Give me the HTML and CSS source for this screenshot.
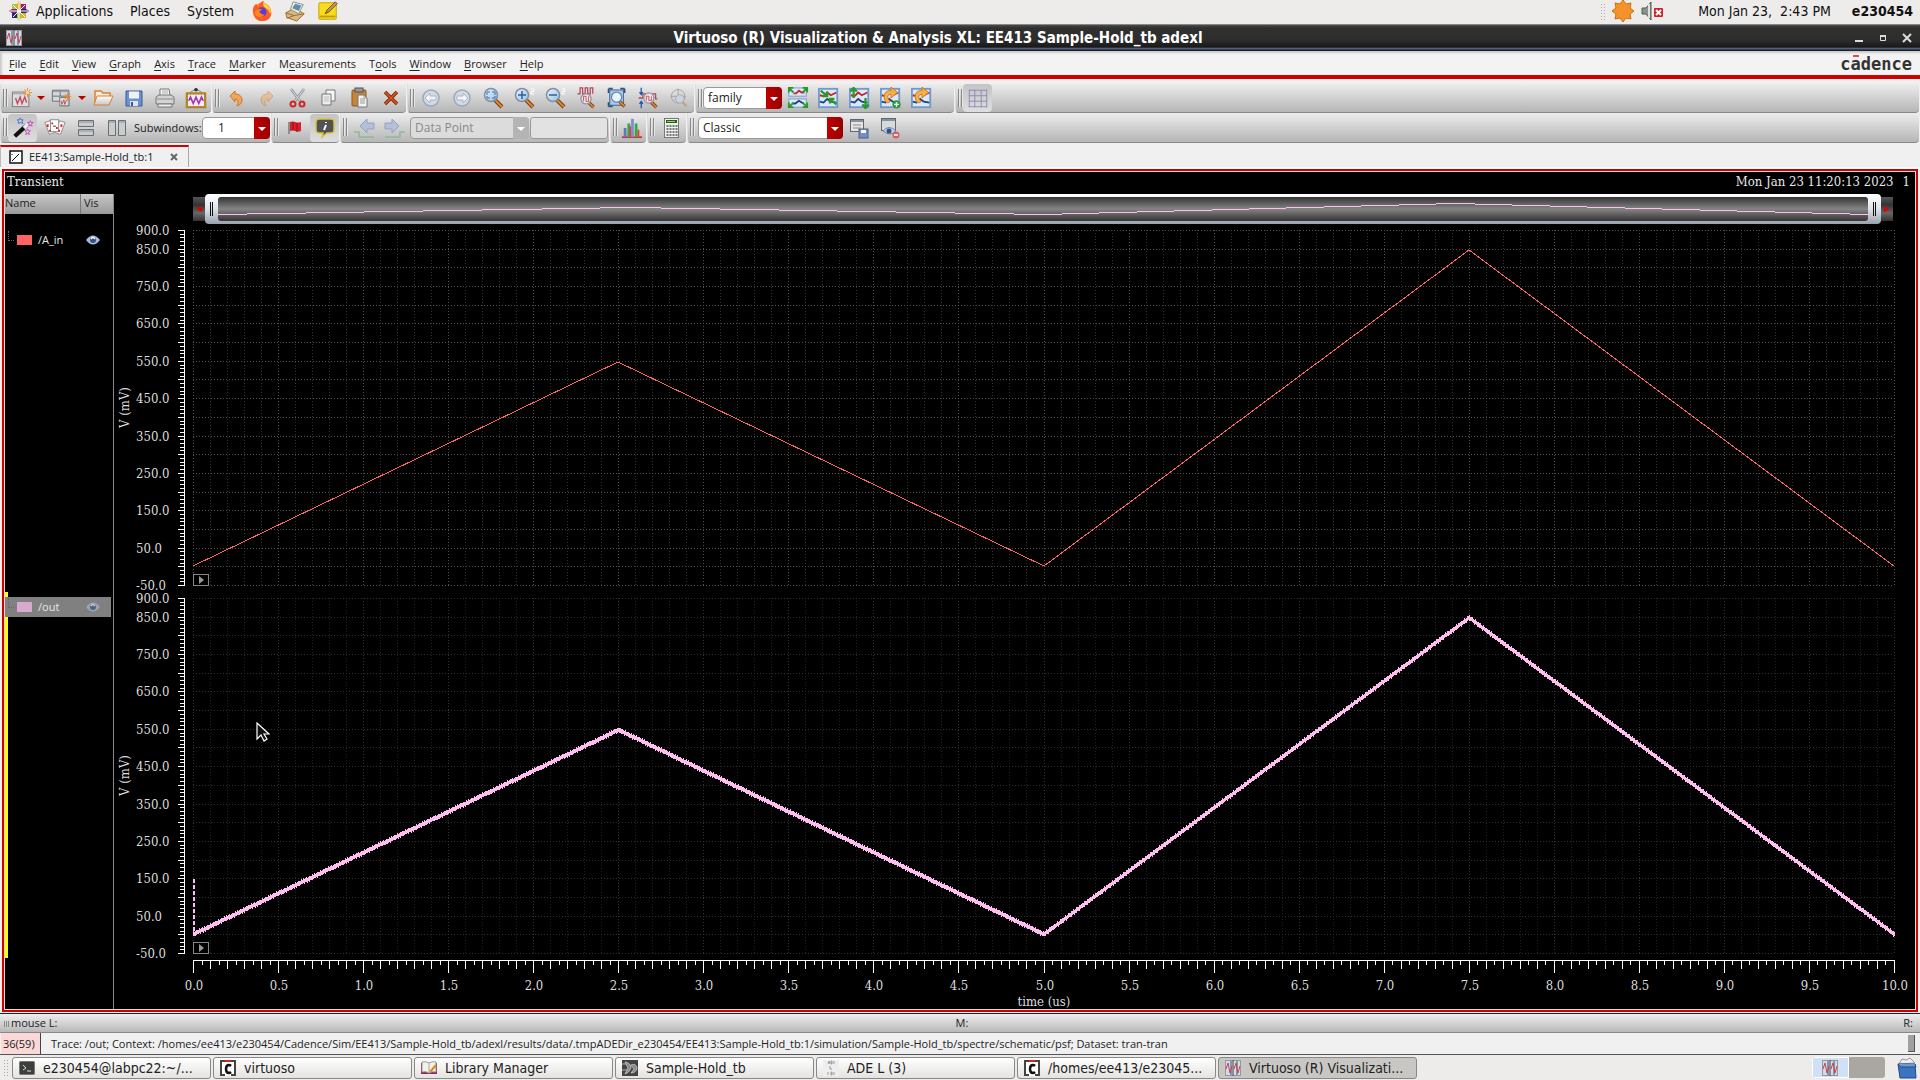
FILE: index.html
```html
<!DOCTYPE html>
<html lang="en">
<head>
<meta charset="utf-8">
<title>Virtuoso (R) Visualization &amp; Analysis XL: EE413 Sample-Hold_tb adexl</title>
<link rel="stylesheet" href="styles.css">
</head>
<body>
<svg class="sprite" aria-hidden="true">
  <linearGradient id="g-sheet" x1="0" y1="0" x2="0" y2="1"><stop offset="0" stop-color="#fff"/><stop offset="1" stop-color="#c8c8c8"/></linearGradient>
  <linearGradient id="g-lens" x1="0" y1="0" x2="1" y2="1"><stop offset="0" stop-color="#e8f2fc"/><stop offset="1" stop-color="#9dbfe2"/></linearGradient>
  <symbol id="i-wave" viewBox="0 0 16 16"><rect x="0.5" y="0.5" width="15" height="15" fill="#d4dae2" stroke="#999"/><rect x="5" y="1" width="2" height="14" fill="#7f97bf"/><rect x="11" y="1" width="2" height="14" fill="#7f97bf"/><path d="M8 0v16" stroke="#444"/><path d="M1 9 3 3 5 13 7 6M9 9 11 3 13 13 15 6" fill="none" stroke="#c8434b"/></symbol>
  <symbol id="i-new" viewBox="0 0 24 22"><rect x="1.500" y="4.500" width="18" height="16" fill="#ddd" stroke="#777"/><path d="M2 6h17" stroke="#aaa" stroke-width="2"/><path d="M5 11l2 6 3-7 2 7 3-7 2 6" fill="none" stroke="#c04858" stroke-width="1.500"/><path d="M18 0v10M13 5h10M14.500 1.500l7 7M21.500 1.500l-7 7" stroke="#e88a2a"/><circle cx="18" cy="5" r="2" fill="#ffd27a"/></symbol>
  <symbol id="i-newsub" viewBox="0 0 24 22"><path d="M1.500 2.500h18v17h-9v-5h-9z" fill="#d4d8d8" stroke="#667"/><path d="M2 9h17M10 3v6" stroke="#667"/><path d="M2 4h17" stroke="#8a98a8"/><rect x="9.500" y="10.500" width="10" height="9" fill="#ddd" stroke="#777"/><path d="M11 14l1 4 2-5 1 5 2-5" fill="none" stroke="#c04858"/><path d="M18 5v9M14 9.500h8M15 6.500l6 6M21 6.500l-6 6" stroke="#e8862a"/></symbol>
  <symbol id="i-open" viewBox="0 0 22 22"><path d="M3 18V4h6l2 2h7v4" fill="#f7ead8" stroke="#d98230" stroke-width="1.500"/><path d="M2 18L5 9h16l-4 9z" fill="url(#g-sheet)" stroke="#d98230"/></symbol>
  <symbol id="i-save" viewBox="0 0 22 22"><path d="M3 4h16v15H3z" fill="#6a93cd" stroke="#39598f"/><rect x="6" y="4.500" width="10" height="7" fill="#eef2f8"/><rect x="7" y="14" width="8" height="5" fill="#dfe4ec"/><rect x="8" y="15" width="2" height="4" fill="#39598f"/></symbol>
  <symbol id="i-print" viewBox="0 0 22 22"><path d="M6 9V2h9l1 7" fill="#fafafa" stroke="#777"/><path d="M8 4h6M8 6h6" stroke="#aaa"/><path d="M2 10l3-2h12l3 2v7H2z" fill="#d4d4d4" stroke="#777"/><path d="M4 17h14v3H4z" fill="#eee" stroke="#777"/><path d="M3 12h16" stroke="#888"/></symbol>
  <symbol id="i-snap" viewBox="0 0 24 24"><path d="M4 7l8-5 8 5" fill="none" stroke="#777"/><circle cx="12" cy="3" r="2" fill="#333"/><rect x="2" y="7" width="20" height="15" fill="#f4ecf4" stroke="#b48522" stroke-width="2.500"/><path d="M4 15l2-4 3 7 3-7 3 7 3-7 2 4" fill="none" stroke="#a83ab0" stroke-width="1.800"/></symbol>
  <symbol id="i-undo" viewBox="0 0 22 22"><path d="M5 9l5-5v3c5 0 7 3 7 6s-2 5-5 6c2-4 1-7-2-7v3z" fill="#f3a65a" stroke="#c97430"/></symbol>
  <symbol id="i-cut" viewBox="0 0 22 22"><path d="M4 2l9 12M17 2L8 14" stroke="#8a9096" stroke-width="2.500"/><path d="M4 2l9 12M17 2L8 14" stroke="#dfe3e8"/><circle cx="6" cy="17" r="2.500" fill="none" stroke="#d0262a" stroke-width="2"/><circle cx="15" cy="17" r="2.500" fill="none" stroke="#d0262a" stroke-width="2"/></symbol>
  <symbol id="i-copy" viewBox="0 0 22 22"><path d="M8 3h9v11H8z" fill="#f6f6f6" stroke="#777"/><path d="M4 7h9v11H4z" fill="#eee" stroke="#777"/><path d="M6 10h5M6 12h5M6 14h5" stroke="#bbb"/></symbol>
  <symbol id="i-paste" viewBox="0 0 22 22"><rect x="3" y="3" width="14" height="16" rx="1" fill="#c5853c" stroke="#895a20"/><rect x="6" y="1" width="8" height="4" fill="#999" stroke="#555"/><path d="M9 8h6l3 3v9H9z" fill="#f5f5f5" stroke="#777"/><path d="M15 8v3h3M11 12h5M11 14h5M11 16h5" fill="none" stroke="#999"/></symbol>
  <symbol id="i-x" viewBox="0 0 22 22"><path d="M5 5l12 12M17 5L5 17" stroke="#7c2a08" stroke-width="3.500"/><path d="M5 5l12 12M17 5L5 17" stroke="#e2581c" stroke-width="1.500"/></symbol>
  <symbol id="i-back" viewBox="0 0 22 22"><circle cx="11" cy="11" r="8" fill="#d2dae4" stroke="#9aa8bc" stroke-width="1.500"/><path d="M5 11l5-5v3h6v4h-6v3z" fill="#f2f4f8" stroke="#a9b5c6"/></symbol>
  <symbol id="i-lens" viewBox="0 0 22 22"><path d="M13 13l7 7" stroke="#7a3d0c" stroke-width="4"/><path d="M13 13l7 7" stroke="#e08a33" stroke-width="2"/><circle cx="9" cy="8" r="6.500" fill="url(#g-lens)" stroke="#7f8fa3" stroke-width="1.500"/></symbol>
  <symbol id="i-zfit" viewBox="0 0 22 22"><use href="#i-lens"/><path d="M5 5h3M5 5v3M13 5h-3M13 5v3M5 11h3M5 11V9M13 11h-3M13 11V9" stroke="#3d6fae"/></symbol>
  <symbol id="i-zin" viewBox="0 0 22 22"><use href="#i-lens"/><path d="M5 8h8M9 4v8" stroke="#2d5f9f" stroke-width="1.500"/><path d="M18 2h3v2.500h-3V7h3" fill="none" stroke="#fff"/></symbol>
  <symbol id="i-zout" viewBox="0 0 22 22"><use href="#i-lens"/><path d="M5 8h8" stroke="#2d5f9f" stroke-width="1.500"/><path d="M18 2h3v2.500h-3V7h3" fill="none" stroke="#fff"/></symbol>
  <symbol id="i-zx" viewBox="0 0 22 26"><path d="M1 8h3V1h3v7h3V1h3v7h3V1h3v7" fill="none" stroke="#b5475a" stroke-width="1.500"/><path d="M14 18l6 6" stroke="#7a3d0c" stroke-width="4"/><path d="M14 18l6 6" stroke="#e08a33" stroke-width="2"/><circle cx="11" cy="14" r="6" fill="#f3dfe6" stroke="#8c96a4" stroke-width="1.500"/><path d="M8 17v-6h3v6h3v-6" fill="none" stroke="#b5475a"/></symbol>
  <symbol id="i-zbox" viewBox="0 0 22 26"><rect x="2.500" y="3.500" width="16" height="18" fill="#a8cdee" stroke="#30527d"/><path d="M1 2h5M1 2v5M20 2h-5M20 2v5M1 23h5M1 23v-5" stroke="#30527d" stroke-width="2"/><path d="M14 17l6 6" stroke="#7a3d0c" stroke-width="4"/><path d="M14 17l6 6" stroke="#e08a33" stroke-width="2"/><circle cx="10.500" cy="12" r="6" fill="#eaf4fd" stroke="#6a87a8" stroke-width="1.500"/></symbol>
  <symbol id="i-zy" viewBox="0 0 22 26"><path d="M3 1v7M1 6l2 3 2-3M3 25v-7M1 20l2-3 2 3" fill="none" stroke="#1e5aa8" stroke-width="1.500"/><path d="M0 13h5V8h4M16 8h4v6h2" fill="none" stroke="#b5475a" stroke-width="1.500"/><path d="M15 18l6 6" stroke="#7a3d0c" stroke-width="4"/><path d="M15 18l6 6" stroke="#e08a33" stroke-width="2"/><circle cx="12" cy="13" r="6" fill="#f3dfe6" stroke="#8c96a4" stroke-width="1.500"/><path d="M9 16v-5h3v5h3v-5" fill="none" stroke="#b5475a"/></symbol>
  <symbol id="i-zpan" viewBox="0 0 22 26"><circle cx="10" cy="11" r="8" fill="none" stroke="#9b9b9b"/><path d="M10 2v16M1 11h18" stroke="#9b9b9b"/><path d="M14 17l6 6" stroke="#c9a27e" stroke-width="3"/><circle cx="12" cy="14" r="5" fill="#cbd4dc" stroke="#9aa8b6"/></symbol>
  <symbol id="i-curves" viewBox="0 0 24 24"><rect x="1" y="2" width="20" height="20" fill="#dbe8f7" stroke="#6f9ad0" stroke-width="2"/><path d="M2 9l4 1 4-4 4 3 6-3" fill="none" stroke="#c3262d" stroke-width="2"/><path d="M2 16l4 1 4-4 4 3 6 1" fill="none" stroke="#1f3f7f" stroke-width="2"/></symbol>
  <symbol id="i-expand" viewBox="0 0 24 24"><rect x="2" y="1" width="19" height="9" fill="#dbe8f7" stroke="#6f9ad0"/><rect x="2" y="13" width="19" height="9" fill="#dbe8f7" stroke="#6f9ad0"/><path d="M7 7h3l3-3 3 2h3" fill="none" stroke="#c3262d" stroke-width="2"/><path d="M6 18l3 0 4-3 5 3" fill="none" stroke="#1f3f7f" stroke-width="2"/><path d="M7 6L2 1m0 5V1h5M17 6l5-5m-5 0h5v5M7 17l-5 5m0-5v5h5M17 17l5 5m-5 0h5v-5" fill="none" stroke="#289a28" stroke-width="2"/></symbol>
  <symbol id="i-shrink" viewBox="0 0 24 24"><use href="#i-curves"/><path d="M3 4l7 6m0-5v5H5M20 19l-7-6m0 5v-5h5" fill="none" stroke="#289a28" stroke-width="2.500"/></symbol>
  <symbol id="i-updown" viewBox="0 0 24 24"><use href="#i-curves"/><path d="M5 12V2M1.500 5L5 1l3.500 4M18 12v10M14.500 19l3.500 4 3.500-4" fill="none" stroke="#289a28" stroke-width="2.500"/></symbol>
  <symbol id="i-reload" viewBox="0 0 24 24"><use href="#i-curves"/><path d="M6 16C2 8 7 3 12 4V0l7 6-7 6V8c-4 0-5 3-1 8-2 2-4 1-5 0z" fill="#f8b04a" stroke="#c87816"/></symbol>
  <symbol id="i-reloadplus" viewBox="0 0 24 24"><use href="#i-reload"/><circle cx="18" cy="19" r="4.500" fill="#2f9a3c"/><path d="M15.500 19h5M18 16.500v5" stroke="#fff" stroke-width="1.500"/></symbol>
  <symbol id="i-grid" viewBox="0 0 24 24"><path d="M2 3.500h20M2 9.500h20M2 15.500h20M2 21.500h20M2.500 3v19M8.500 3v19M15.500 3v19M21.500 3v19" stroke="#8a8ab8"/></symbol>
  <symbol id="i-wand" viewBox="0 0 24 24"><path d="M3 21L16 9" stroke="#111" stroke-width="4.500"/><path d="M13 12l4-4" stroke="#eee" stroke-width="4"/><path d="M9 1l1 2h2l-1 2 1 2-3-1-2 1 0-2-1-2h2z" fill="none" stroke="#3c6ad4"/><path d="M20 4l1 2h2l-2 2 1 2-2-1-2 1 1-2-2-2h2zM17 13l1 2h2l-2 2 1 2-2-1-2 1 1-2-2-2h2z" fill="none" stroke="#cf3bc0"/></symbol>
  <symbol id="i-cards" viewBox="0 0 24 22"><path d="M1 5l6-2 4 13-5 2zM23 5l-6-2-5 13 6 2z" fill="#fafafa" stroke="#888"/><rect x="7" y="2" width="9" height="13" fill="#fff" stroke="#888"/><path d="M4 7v3M9 5v2M14 10v2M19 7v3M17 13l-1 2M6 13l1 2" stroke="#d22" stroke-width="2"/><path d="M10 9h3" stroke="#222"/></symbol>
  <symbol id="i-rows" viewBox="0 0 22 22"><path d="M3.500 3.500h15v6h-15zM3.500 12.500h15v6h-15z" fill="#c9cdcd" stroke="#6a7070"/><path d="M4 5h14M4 14h14" stroke="#8094a8"/></symbol>
  <symbol id="i-cols" viewBox="0 0 22 22"><path d="M2.500 3.500h7v15h-7zM12.500 3.500h7v15h-7z" fill="#c9cdcd" stroke="#6a7070"/><path d="M3 5h6M13 5h6" stroke="#8094a8"/></symbol>
  <symbol id="i-flag" viewBox="0 0 22 22"><path d="M5 5v12" stroke="#777" stroke-width="1.500"/><path d="M6 5c4-2 6 2 11 0v9c-5 2-7-2-11 0z" fill="#d4202a"/><path d="M9 5v8M13 6v9" stroke="#8e1018"/></symbol>
  <symbol id="i-info" viewBox="0 0 22 22"><path d="M5 2h12q3 0 3 3v8q0 3-3 3h-4l-5 4 1-4H5q-3 0-3-3V5q0-3 3-3z" fill="#505256" stroke="#d9c43a" stroke-width="1.500"/><path d="M12 5v1M12 8l-2 5" stroke="#fff" stroke-width="2"/></symbol>
  <symbol id="i-prev" viewBox="0 0 22 22"><path d="M1 15h5v5h15" fill="none" stroke="#8dba9a" stroke-width="1.500"/><path d="M7 9l7-7v4h7v6h-7v4z" fill="#b3c0d8" stroke="#94a3c0"/></symbol>
  <symbol id="i-hist" viewBox="0 0 24 24"><path d="M1 22h22" stroke="#d33" stroke-width="2"/><path d="M3 22V12h3v10z" fill="#5b78c0"/><path d="M7 22V7h3v15zM15 22V7h3v15z" fill="#2fae3e"/><path d="M11 22V2h3v20z" fill="#7d8cd8"/><path d="M9 22V10h2v12zM18 22v-8h2v8z" fill="#dd4040"/></symbol>
  <symbol id="i-calc" viewBox="0 0 22 22"><rect x="4.500" y="1.500" width="14" height="19" fill="#efefef" stroke="#777"/><rect x="6" y="3" width="11" height="3" fill="#2a5a20"/><path d="M7 4.500h8" stroke="#7de840"/><path d="M6.500 9h11M6.500 12h11M6.500 15h11M6.500 18h11" stroke="#777" stroke-width="2" stroke-dasharray="2 1"/></symbol>
  <symbol id="i-panelsave" viewBox="0 0 22 22"><rect x="2.500" y="2.500" width="13" height="12" fill="#e4e6e4" stroke="#666"/><path d="M3 4h12" stroke="#8094a8" stroke-width="2"/><path d="M5 8h8M5 11h8" stroke="#888"/><rect x="11" y="12" width="9" height="9" fill="#7590c8" stroke="#4a5f90"/><path d="M13 13h5v3h-5z" fill="#fff"/></symbol>
  <symbol id="i-paneldel" viewBox="0 0 22 22"><rect x="2.500" y="1.500" width="14" height="12" fill="#d8dada" stroke="#666"/><path d="M3 3h13" stroke="#8094a8" stroke-width="2"/><path d="M4 14q6-7 13 0-6 6-13 0z" fill="#c4d4ee" stroke="#6680aa"/><circle cx="10" cy="14" r="2.500" fill="#34507c"/><circle cx="17" cy="18" r="3.500" fill="#d86060"/><path d="M15 18h4" stroke="#fff" stroke-width="1.500"/></symbol>
  <symbol id="i-eye" viewBox="0 0 14 10"><path d="M0 5q7-9 14 0-7 9-14 0z" fill="#a9bcdd"/><circle cx="7" cy="5" r="3" fill="#34507c"/><path d="M5 4q2-3 4 0" fill="none" stroke="#fff" stroke-width="1.500"/></symbol>
  <symbol id="i-cds" viewBox="0 0 16 16"><rect width="16" height="16" fill="#fff"/><path d="M5 1H1v14h4M11 1h4v14h-4" fill="none" stroke="#444" stroke-width="2"/><path d="M11 6q-1-1-2-1-3 0-3 4t3 4q1 0 2-1" fill="none" stroke="#111" stroke-width="2.500"/><path d="M5 1h6" stroke="#d22" stroke-width="2"/></symbol>
</svg>

<header class="panel">
  <nav class="panel-menu">
    <svg class="ic22" viewBox="0 0 22 22"><path d="M11 1l3 4h4v4l3 2-3 3v4h-4l-3 3-3-3H4v-4l-3-3 3-2V5h4z" fill="#e8d8e8"/><path d="M4 4h6v6H4z" fill="#9fcc3a"/><path d="M12 4h6v6h-6z" fill="#932279"/><path d="M4 12h6v6H4z" fill="#262577"/><path d="M12 12h6v6h-6z" fill="#efa724"/><path d="M11 1l2 3v6h-4V4z" fill="#efa724"/><path d="M21 11l-3 2h-5V9h5z" fill="#262577"/><path d="M1 11l3-2h5v4H4z" fill="#932279"/><path d="M11 21l-2-3v-5h4v5z" fill="#9fcc3a"/><path d="M5 5l12 12M17 5L5 17M11 2v18M2 11h18" stroke="#fff"/></svg>
    <button>Applications</button><button>Places</button><button>System</button>
  </nav>
  <div class="launchers">
    <svg class="ic24" viewBox="0 0 24 24"><circle cx="12" cy="13" r="10" fill="#ff9a1f"/><path d="M2 12Q2 6 6 4q0 2 2 3 1-5 6-6 0 3 4 5 5 4 4 10-2 7-10 7T2 12z" fill="#ff5a2a"/><path d="M14 1q0 3 4 5 5 4 3 9-2-5-6-7-3-2-1-7z" fill="#ffd83d"/><circle cx="12" cy="13" r="5" fill="#5a3fd0"/><path d="M4 13q3-4 8-3-2 2-3 2 1 4 6 4-4 4-8 2-3-2-3-5z" fill="#ff8a1a"/></svg>
    <svg class="ic24" viewBox="0 0 24 24"><path d="M2 14l9-5 11 6-8 8-11-4z" fill="#dcb87c" stroke="#94692e"/><path d="M10 2l11 3-5 10-9-5z" fill="#eef2ee" stroke="#888"/><path d="M12 4l7 2-3 6-7-3z" fill="#5e8fa6"/><path d="M2 14l9 3 11-2M11 17l-8 3" fill="none" stroke="#94692e"/></svg>
    <svg class="ic24" viewBox="0 0 24 24"><rect x="2" y="3" width="19" height="18" rx="1" fill="#f8dc1c" stroke="#c2a000"/><path d="M3 18h17" stroke="#c2a000" stroke-width="2"/><path d="M9 15l2-4L20 2l2 2-9 9z" fill="#c99a60" stroke="#5f4420"/></svg>
  </div>
  <div class="tray">
    <i class="dots"></i>
    <svg class="ic22" viewBox="0 0 22 22"><path d="M11 0l3 4 5-1-1 5 4 3-4 3 1 5-5-1-3 4-3-4-5 1 1-5-4-3 4-3-1-5 5 1z" fill="#f5932a" stroke="#d06f10"/></svg>
    <svg class="ic22" viewBox="0 0 22 22"><path d="M1 8h4l5-6v18l-5-6H1z" fill="#8d938c" stroke="#555b55"/><path d="M8 4v14" stroke="#dfe3de" stroke-width="2"/><rect x="13" y="8" width="9" height="9" rx="1" fill="#d81e28"/><path d="M15 10l5 5M20 10l-5 5" stroke="#fff" stroke-width="2"/></svg>
  </div>
  <time class="clock">Mon Jan 23,&nbsp; 2:43 PM</time>
  <b class="user">e230454</b>
</header>

<div class="titlebar">
  <svg class="ic16"><use href="#i-wave"/></svg>
  <h1>Virtuoso (R) Visualization &amp; Analysis XL: EE413 Sample-Hold_tb adexl</h1>
  <div class="winbtns">
    <button aria-label="Minimize"><svg viewBox="0 0 10 10"><path d="M1 8h8" stroke="#ddd" stroke-width="2"/></svg></button>
    <button aria-label="Maximize"><svg viewBox="0 0 10 10"><path d="M2.500 3h5v4.500h-5z" fill="none" stroke="#ddd"/><path d="M2 3h6" stroke="#ddd" stroke-width="2"/></svg></button>
    <button aria-label="Close"><svg viewBox="0 0 10 10"><path d="M1 1l8 8M9 1l-8 8" stroke="#ddd" stroke-width="2"/></svg></button>
  </div>
</div>

<nav class="menubar">
  <button><u>F</u>ile</button><button><u>E</u>dit</button><button><u>V</u>iew</button><button><u>G</u>raph</button><button><u>A</u>xis</button><button><u>T</u>race</button><button><u>M</u>arker</button><button>M<u>e</u>asurements</button><button>T<u>o</u>ols</button><button><u>W</u>indow</button><button><u>B</u>rowser</button><button><u>H</u>elp</button>
  <span class="brand">c<span class="macron">a</span>dence</span>
</nav>

<div class="toolbars">
  <div class="row">
    <div class="group">
      <button class="tb wide" aria-label="New window"><svg><use href="#i-new"/></svg></button><button class="drop" aria-label="New window options"></button>
      <button class="tb" aria-label="New subwindow"><svg><use href="#i-newsub"/></svg></button><button class="drop" aria-label="New subwindow options"></button>
      <button class="tb" aria-label="Open"><svg><use href="#i-open"/></svg></button>
      <button class="tb" aria-label="Save"><svg><use href="#i-save"/></svg></button>
      <button class="tb" aria-label="Print"><svg><use href="#i-print"/></svg></button>
      <button class="tb" aria-label="Snapshot"><svg><use href="#i-snap"/></svg></button>
    </div>
    <div class="group">
      <button class="tb" aria-label="Undo"><svg><use href="#i-undo"/></svg></button>
      <button class="tb faded flip" aria-label="Redo"><svg><use href="#i-undo"/></svg></button>
      <button class="tb" aria-label="Cut"><svg><use href="#i-cut"/></svg></button>
      <button class="tb" aria-label="Copy"><svg><use href="#i-copy"/></svg></button>
      <button class="tb" aria-label="Paste"><svg><use href="#i-paste"/></svg></button>
      <button class="tb" aria-label="Delete"><svg><use href="#i-x"/></svg></button>
    </div>
    <div class="group">
      <button class="tb" aria-label="Previous view"><svg><use href="#i-back"/></svg></button>
      <button class="tb flip" aria-label="Next view"><svg><use href="#i-back"/></svg></button>
      <button class="tb" aria-label="Fit"><svg><use href="#i-zfit"/></svg></button>
      <button class="tb" aria-label="Zoom in by 2"><svg><use href="#i-zin"/></svg></button>
      <button class="tb" aria-label="Zoom out by 2"><svg><use href="#i-zout"/></svg></button>
      <button class="tb" aria-label="Zoom X"><svg><use href="#i-zx"/></svg></button>
      <button class="tb" aria-label="Zoom area"><svg><use href="#i-zbox"/></svg></button>
      <button class="tb" aria-label="Zoom Y"><svg><use href="#i-zy"/></svg></button>
      <button class="tb" aria-label="Pan"><svg><use href="#i-zpan"/></svg></button>
    </div>
    <div class="group">
      <span class="combo c-family"><select aria-label="Strip by"><option>family</option></select></span>
      <button class="tb" aria-label="Split strips"><svg><use href="#i-expand"/></svg></button>
      <button class="tb" aria-label="Combine strips"><svg><use href="#i-shrink"/></svg></button>
      <button class="tb" aria-label="Swap strips"><svg><use href="#i-updown"/></svg></button>
      <button class="tb" aria-label="Reload and append"><svg><use href="#i-reloadplus"/></svg></button>
      <button class="tb" aria-label="Reload"><svg><use href="#i-reload"/></svg></button>
      <i class="gap"></i>
    </div>
    <div class="group fill">
      <button class="tb on" aria-label="Show grid"><svg><use href="#i-grid"/></svg></button>
    </div>
  </div>
  <div class="row">
    <div class="group">
      <button class="tb on" aria-label="Assistants"><svg><use href="#i-wand"/></svg></button>
      <button class="tb" aria-label="Card layout"><svg><use href="#i-cards"/></svg></button>
      <button class="tb" aria-label="Horizontal layout"><svg><use href="#i-rows"/></svg></button>
      <button class="tb" aria-label="Vertical layout"><svg><use href="#i-cols"/></svg></button>
      <label for="subw">Subwindows:</label>
      <span class="combo c-sub"><select id="subw"><option>1</option></select></span>
    </div>
    <div class="group">
      <button class="tb" aria-label="Flag"><svg><use href="#i-flag"/></svg></button>
      <button class="tb on" aria-label="Info balloon"><svg><use href="#i-info"/></svg></button>
    </div>
    <div class="group">
      <button class="tb" aria-label="Previous edge"><svg><use href="#i-prev"/></svg></button>
      <button class="tb flip" aria-label="Next edge"><svg><use href="#i-prev"/></svg></button>
      <span class="combo c-point off"><select aria-label="Snap mode" disabled><option>Data Point</option></select></span>
      <input class="value" aria-label="Snap value" disabled>
    </div>
    <div class="group">
      <button class="tb slim" aria-label="Histogram"><svg><use href="#i-hist"/></svg></button>
    </div>
    <div class="group">
      <button class="tb" aria-label="Calculator"><svg><use href="#i-calc"/></svg></button>
    </div>
    <div class="group fill">
      <span class="combo c-classic"><select aria-label="Workspace"><option>Classic</option></select></span>
      <button class="tb" aria-label="Save workspace"><svg><use href="#i-panelsave"/></svg></button>
      <button class="tb" aria-label="Delete workspace"><svg><use href="#i-paneldel"/></svg></button>
    </div>
  </div>
</div>

<div class="tabs">
  <div class="tab">
    <svg class="ic14" viewBox="0 0 14 14"><rect x="1" y="1" width="12" height="12" fill="#fff" stroke="#111" stroke-width="1.500"/><path d="M3 11l7-7M3 4v1" stroke="#111"/></svg>
    <span>EE413:Sample-Hold_tb:1</span>
    <button aria-label="Close tab"><svg viewBox="0 0 8 8"><path d="M1 1l6 6M7 1L1 7" stroke="#666" stroke-width="2"/></svg></button>
  </div>
</div>

<main class="frame">
  <div class="caption"><span>Transient</span><span class="stamp">Mon Jan 23 11:20:13 2023</span><span class="index">1</span></div>
  <div class="work">
    <aside class="legend">
      <div class="lhead"><span>Name</span><span>Vis</span></div>
      <div class="strip"><div class="trace"><i class="branch"></i><i class="swatch red"></i><span>/A_in</span><svg class="eye"><use href="#i-eye"/></svg></div></div>
      <div class="strip active"><div class="trace"><i class="branch"></i><i class="swatch pink"></i><span>/out</span><svg class="eye dim"><use href="#i-eye"/></svg></div></div>
    </aside>
    <section class="view">
      <div class="range">
        <i class="cap left"></i>
        <div class="slider"><i class="grip"></i><div class="track"><svg id="overview"></svg></div><i class="grip"></i></div>
        <i class="cap right"></i>
      </div>
      <div class="canvas"><svg id="plot"></svg></div>
      <svg class="pointer" viewBox="0 0 14 21"><path d="M1 1v16l4-4 3 6 3-2-3-5h5z" fill="#111" stroke="#fff" stroke-width="1.200"/></svg>
    </section>
  </div>
</main>

<div class="mousebar"><span>mouse L:</span><span>M:</span><span>R:</span></div>
<div class="status"><span class="count">36(59)</span><span class="msg">Trace: /out; Context: /homes/ee413/e230454/Cadence/Sim/EE413/Sample-Hold_tb/adexl/results/data/.tmpADEDir_e230454/EE413:Sample-Hold_tb:1/simulation/Sample-Hold_tb/spectre/schematic/psf; Dataset: tran-tran</span><i class="sizer"></i></div>

<footer class="taskbar">
  <i class="dots"></i>
  <div class="tasks">
    <button><svg class="ic16" viewBox="0 0 16 16"><rect x="0.500" y="1.500" width="15" height="13" rx="1" fill="#3b403c" stroke="#777"/><path d="M4 5l3 3-3 2M8 11h4" fill="none" stroke="#ddd"/></svg>e230454@labpc22:~/...</button>
    <button><svg class="ic16"><use href="#i-cds"/></svg>virtuoso</button>
    <button><svg class="ic16" viewBox="0 0 16 16"><path d="M0 3h16v11H0z" fill="#8b2a5a"/><path d="M1 2q4-1 7 1 3-2 7-1v10q-4-1-7 1-3-2-7-1z" fill="#f4f1ea" stroke="#999"/><path d="M8 3v10" stroke="#aaa"/><path d="M9 12l6-7" stroke="#d98a1e" stroke-width="2"/></svg>Library Manager</button>
    <button><svg class="ic16" viewBox="0 0 16 16"><rect width="16" height="16" fill="#444"/><path d="M0 4h4M0 10h5M3 2q6 1 6 6-2 5-6 6l3-6zM9 5q5-2 6 3-1 5-6 5l3-4z" fill="#888" stroke="#ccc" stroke-width=".8"/></svg>Sample-Hold_tb</button>
    <button><svg class="ic16" viewBox="0 0 16 16"><rect width="16" height="16" fill="#eee"/><path d="M5 4l1-3 1 3M8 1v3h1V1zM11 1v3M7 6v3h2M5 12v3M8 12v3h1v-3zM11 12v3" fill="none" stroke="#999"/></svg>ADE L (3)</button>
    <button><svg class="ic16"><use href="#i-cds"/></svg>/homes/ee413/e23045...</button>
    <button class="current"><svg class="ic16"><use href="#i-wave"/></svg>Virtuoso (R) Visualizati...</button>
  </div>
  <div class="pager"><span><svg class="ic16"><use href="#i-wave"/></svg></span><span></span></div>
  <svg class="ic22" viewBox="0 0 22 22"><path d="M3 7l3-5 4 1 4-2 5 5z" fill="#eee" stroke="#999"/><path d="M2 7h17l1 14H4z" fill="#3a75bd" stroke="#204a87"/><path d="M2 7l3 3h15l-1-3" fill="#6b9bd6" stroke="#204a87"/></svg>
</footer>
<script src="plot.js"></script>
</body>
</html>
```
FILE: styles.css
```css
* { box-sizing: border-box; }
body { margin: 0; min-height: 100vh; display: flex; flex-direction: column; background: #f0f0f0; color: #222; font: 11px/14px "Open Sans", "Noto Sans", sans-serif; }
button { border: 0; background: none; padding: 0; margin: 0; font: inherit; color: inherit; }
svg { display: block; flex: none; }
i { display: block; flex: none; }
.sprite { position: absolute; width: 0; height: 0; }
.ic14 { width: 14px; height: 14px; }
.ic16 { width: 16px; height: 16px; }
.ic22 { width: 22px; height: 22px; }
.ic24 { width: 24px; height: 22px; }

/* desktop panel */
.panel { display: flex; align-items: center; height: 25px; padding: 0 7px 2px 8px; background: #edecea; border-bottom: 1px solid #888; font: 14px/20px "DejaVu Sans Condensed", "DejaVu Sans", sans-serif; color: #111; }
.panel-menu { display: flex; align-items: center; gap: 17px; }
.panel-menu svg { margin-right: -11px; }
.launchers { display: flex; gap: 9px; margin-left: 16px; }
.tray { display: flex; align-items: center; gap: 7px; margin-left: auto; }
.dots { width: 5px; height: 17px; background: radial-gradient(circle, #aaa 1px, transparent 1px) 0 0 / 3px 3px; }
.clock { margin-left: 35px; }
.user { margin-left: 21px; }

/* window title */
.titlebar { display: flex; align-items: center; height: 26px; padding: 0 6px; background: linear-gradient(#4a4a4a, #303030 3px, #2e2e2e 55%, #191919 85%, #526581 90%, #101010); color: #fff; }
.titlebar h1 { flex: 1; margin: 0; text-align: center; font: bold 15px/22px "DejaVu Sans Condensed", "DejaVu Sans", sans-serif; }
.winbtns { display: flex; gap: 14px; margin-right: 2px; }
.winbtns svg { width: 10px; height: 10px; }

.menubar { display: flex; align-items: center; gap: 13px; height: 28px; padding: 2px 8px 0 9px; background: #f3f3f3; border-bottom: 4px solid #d00000; box-shadow: inset 2px 2px 2px #ccc; }
.menubar u { text-underline-offset: 2px; }
.brand { margin-left: auto; font: bold 17px/22px "DejaVu Sans Mono", monospace; color: #333; }
.macron { position: relative; }
.macron::before { content: ""; position: absolute; left: 2px; right: 2px; top: 1px; height: 2px; background: #e44; }

/* tool bars */
.toolbars { padding-top: 5px; }
.row { display: flex; height: 29px; padding-right: 1px; }
.row + .row { height: 30px; }
.group { display: flex; align-items: center; height: 100%; padding-left: 7px; margin-right: 1px; background: linear-gradient(#ececec, #b6b6b6); border-bottom: 1px solid #888; border-radius: 0 0 4px 4px; position: relative; border-left: 1px solid #ddd; }
.group::before { content: ""; position: absolute; left: 2px; top: 5px; width: 6px; height: 18px; background: repeating-linear-gradient(90deg, #888 0 1px, #e8e8e8 1px 2px, transparent 2px 3px); }
.fill { flex: 1; margin-right: 0; }
.tb { display: grid; place-items: center; width: 31px; height: 28px; }
.tb svg { width: 22px; height: 22px; }
.tb.on { background: linear-gradient(#c4c4c4, #dedede); border-radius: 4px; width: 29px; margin-right: 2px; }
.group > .tb.on:last-child { margin-right: 0; }
.faded { opacity: .45; }
.flip svg { transform: scaleX(-1); }
.tb.wide { width: 28px; }
.tb.slim { width: 28px; }
.drop { width: 10px; height: 28px; display: grid; place-items: center; }
.drop::before { content: ""; border: 4px solid transparent; border-top: 4px solid #b00; border-bottom: 0; }
.gap { width: 17px; }
.combo { position: relative; display: block; height: 22px; }
.combo select { appearance: none; width: 100%; height: 22px; margin: 0; padding: 0 20px 0 4px; border: 1px solid #999; border-radius: 4px; background: #fff; font: 12px/18px "Open Sans", sans-serif; color: #222; }
.combo::before { content: ""; position: absolute; right: 0; top: 0; width: 16px; height: 22px; border-radius: 0 4px 4px 0; background: linear-gradient(90deg, #c00000, #980000); pointer-events: none; }
.combo::after { content: ""; position: absolute; right: 4px; top: 10px; border: 4px solid transparent; border-top-color: #fff; border-bottom: 0; pointer-events: none; }
.combo.off::before { background: #b4b4b4; }
.combo.off select { background: #dcdcdc; color: #888; opacity: 1; }
.c-family { width: 79px; }
.c-sub { width: 68px; }
.c-sub select { padding-left: 15px; }
.c-point { width: 119px; }
.c-classic { width: 145px; margin-left: 3px; }
.value { width: 78px; height: 22px; border: 1px solid #999; border-radius: 3px; background: #e2e2e2; margin: 0 1px; }
.group label { width: 68px; margin-left: 2px; }

.tabs { display: flex; height: 26px; padding-top: 2px; border-bottom: 2px solid #fff; }
.tab { display: flex; align-items: center; gap: 6px; padding: 0 10px 0 8px; border-top: 2px solid #d00000; border-right: 1px solid #aaa; border-left: 1px solid #bbb; }
.tab button { margin-left: 11px; }
.tab button svg { width: 8px; height: 8px; }

/* graph window */
.frame { flex: 1; display: flex; flex-direction: column; margin: 0 2px; background: #000; border: 2px solid #d00000; box-shadow: inset 0 0 0 1px #ddd; color: #e8e8e8; padding: 1px; font: 13px/16px "DejaVu Serif Condensed", "DejaVu Serif", serif; }
.caption { display: flex; height: 22px; padding: 2px 5px 0 2px; }
.stamp { margin-left: auto; }
.index { margin-left: 9px; }
.work { flex: 1; display: flex; }
.legend { width: 109px; display: flex; flex-direction: column; border-right: 1px solid #888; font: 11px/14px "Open Sans", sans-serif; padding-bottom: 51px; }
.lhead { display: grid; grid-template-columns: 75px 1fr; height: 20px; line-height: 18px; background: linear-gradient(#c8c8c8, #999); color: #222; }
.lhead span + span { border-left: 1px solid #777; padding-left: 3px; }
.strip { flex: 1; padding-top: 16px; }
.strip.active { border-left: 3px solid #ff0; padding-top: 5px; }
.trace { display: flex; align-items: center; height: 20px; padding-left: 3px; margin-right: 2px; }
.active .trace { background: #808080; margin-left: -3px; }
.branch { width: 6px; height: 10px; margin-top: -8px; border-left: 1px dotted #666; border-bottom: 1px dotted #666; }
.swatch { width: 15px; height: 10px; margin: 0 6px 0 3px; }
.red { background: #ff6464; }
.pink { background: #d9a9d0; }
.eye { width: 14px; height: 10px; margin: 0 11px 0 auto; }
.dim { opacity: .6; }
.view { position: relative; flex: 1; min-width: 0; display: flex; flex-direction: column; }
.range { display: flex; align-items: center; height: 30px; margin: 0 22px 0 79px; }
.cap { width: 12px; height: 24px; background: linear-gradient(#555, #333, #666, #333); display: grid; place-items: center; }
.cap::before { content: ""; border: 3px solid transparent; border-right: 6px solid #d00; border-left: 0; }
.cap.right::before { border-right: 0; border-left: 6px solid #d00; }
.slider { flex: 1; display: flex; height: 30px; background: linear-gradient(#fff, #dfe3ea 50%, #99a1ad); border-radius: 4px; }
.grip { width: 13px; height: 30px; background: linear-gradient(90deg, #111 0 1px, transparent 1px 2px, #111 2px 3px) 5px 8px / 3px 14px no-repeat; }
.track { flex: 1; min-width: 0; height: 24px; margin-top: 3px; background: linear-gradient(#333, #858585 50%, #333); border-radius: 3px; }
.track svg { width: 100%; height: 24px; }
.canvas { flex: 1; min-height: 300px; }
.canvas svg { width: 100%; height: 100%; overflow: visible; }
.canvas text { fill: #ddd; }
.pointer { position: absolute; left: 142px; top: 528px; width: 14px; height: 21px; }

.mousebar { display: grid; grid-template-columns: 1fr auto 1fr; align-items: center; height: 19px; margin-top: 2px; padding: 0 7px 0 11px; background: repeating-linear-gradient(90deg, #888 0 1px, transparent 1px 2px) 4px 7px / 5px 6px no-repeat, linear-gradient(#eee, #b8b8b8); border-bottom: 1px solid #888; box-shadow: 0 -1px #222; }
.mousebar span:last-child { text-align: right; }
.status { display: flex; align-items: center; height: 22px; border-bottom: 1px solid #555; padding-left: 1px; }
.count { align-self: stretch; width: 40px; padding: 4px 0 0 2px; background: #fad8d8; border-right: 1px solid #444; }
.msg { margin-left: 10px; white-space: nowrap; }
.sizer { width: 7px; height: 17px; margin: 0 5px 0 auto; background: #a0a0a4; border-right: 1px solid #555; border-bottom: 1px solid #555; }

.taskbar { display: flex; align-items: center; height: 25px; padding: 0 2px 0 3px; background: #edecea; font: 14px/18px "DejaVu Sans Condensed", "DejaVu Sans", sans-serif; color: #222; }
.tasks { display: grid; grid-template-columns: repeat(7, minmax(0, 199px)); gap: 2px; flex: 1; margin-left: 4px; }
.tasks button { display: flex; align-items: center; gap: 8px; height: 22px; padding: 0 6px; border: 1px solid #888; border-radius: 3px; background: linear-gradient(#fff, #e4e3e0); white-space: nowrap; overflow: hidden; }
.tasks .current { background: #c9c7c4; }
.pager { display: grid; grid-template-columns: 1fr 1fr; width: 73px; height: 21px; margin-right: 11px; border-radius: 3px; background: #aaa6a2; overflow: hidden; }
.pager span { display: grid; place-items: center; }
.pager span:first-child { background: #cfe0f7; border: 1px solid #fff; }
```
FILE: plot.js
```js
const NS = "http://www.w3.org/2000/svg";
const svg = document.getElementById("plot");
const overview = document.getElementById("overview");
const PAD = { left: 79, right: 21, top: 6, bottom: 56, gap: 13 };
const WAVE = [[0, 0], [2.5, 547], [5, 0], [7.5, 847], [10, 0]];
const Y_MIN = -50, Y_MAX = 900;

function add(parent, name, attrs, text) {
  const el = document.createElementNS(NS, name);
  for (const key in attrs) el.setAttribute(key, attrs[key]);
  if (text !== undefined) el.textContent = text;
  parent.appendChild(el);
}

function valueAt(t) {
  for (let i = 1; i < WAVE.length; i++) {
    const [t0, v0] = WAVE[i - 1], [t1, v1] = WAVE[i];
    if (t <= t1) return v0 + (v1 - v0) * (t - t0) / (t1 - t0);
  }
  return 0;
}

function draw() {
  const W = svg.clientWidth, H = svg.clientHeight;
  svg.replaceChildren();
  const w = W - PAD.left - PAD.right;
  const h = (H - PAD.top - PAD.bottom - PAD.gap) / 2;
  const X = t => Math.round(PAD.left + w * t / 10);
  const crisp = { fill: "none", "shape-rendering": "crispEdges" };

  [0, 1].forEach(strip => {
    const top = PAD.top + strip * (h + PAD.gap);
    const Y = v => Math.round(top + h * (Y_MAX - v) / (Y_MAX - Y_MIN));
    let minor = "", major = "", ticks = `M70.5 ${Y(Y_MAX)}V${Y(Y_MIN) + 1}`;
    for (let i = 0; i <= 100; i++) {
      const d = `M${X(i / 10) + .5} ${Y(Y_MAX)}V${Y(Y_MIN)}`;
      if (i % 5) minor += d; else major += d;
    }
    for (let v = Y_MIN; v <= Y_MAX; v += 10) {
      const big = v % 50 === 0;
      ticks += `M${big ? 64 : 66} ${Y(v) + .5}H71`;
      if (big) major += `M${X(0)} ${Y(v) + .5}H${X(10)}`;
    }
    const dots = { ...crisp, "stroke-dasharray": "1 2" };
    add(svg, "path", { ...dots, d: minor, stroke: strip ? "#222" : "#303030" });
    add(svg, "path", { ...dots, d: major, stroke: strip ? "#303030" : "#505050" });
    add(svg, "path", { ...crisp, d: ticks, stroke: "#fff" });
    [900, 850, 750, 650, 550, 450, 350, 250, 150, 50, -50].forEach(v =>
      add(svg, "text", { x: 22, y: Y(v) + 5 }, v.toFixed(1)));
    const mid = top + h / 2;
    add(svg, "text", { x: 15, y: mid, "text-anchor": "middle", transform: `rotate(-90 15 ${mid})` }, "V (mV)");

    if (strip === 0) {
      const pts = WAVE.map(([t, v]) => `${X(t)},${Y(v)}`).join(" ");
      add(svg, "polyline", { ...crisp, points: pts, stroke: "#ff6464" });
    } else {
      let d = "";
      for (let x = X(0); x <= X(10); x++) {
        const y = Y(valueAt((x - PAD.left) / w * 10));
        const up = 2 + (x * 7 % 11 < 4 ? 1 : 0), down = 2 + (x * 5 % 13 < 4 ? 1 : 0);
        d += `M${x + .5} ${y - up}V${y + down}`;
      }
      add(svg, "path", { ...crisp, d, stroke: "#ffbef0" });
      add(svg, "path", { ...crisp, d: `M${X(0) + 1} ${Y(148)}V${Y(0)}`, stroke: "#ffbef0", "stroke-width": 2, "stroke-dasharray": "4 2" });
    }
    add(svg, "rect", { ...crisp, x: X(0) + .5, y: Y(Y_MIN) - 10.5, width: 15, height: 11, stroke: "#888" });
    add(svg, "path", { d: `M${X(0) + 6} ${Y(Y_MIN) - 9}v8l5-4z`, fill: "#999" });
  });

  const axis = H - 49;
  let d = `M${X(0)} ${axis + .5}H${X(10) + 1}`;
  for (let i = 0; i <= 200; i++) {
    d += `M${X(i / 20) + .5} ${axis}v${i % 10 === 0 ? 13 : i % 2 ? 5 : 9}`;
  }
  add(svg, "path", { ...crisp, d, stroke: "#fff" });
  for (let i = 0; i <= 20; i++) {
    add(svg, "text", { x: X(i / 2) + 1, y: axis + 30, "text-anchor": "middle" }, (i / 2).toFixed(1));
  }
  add(svg, "text", { x: X(5), y: axis + 46, "text-anchor": "middle" }, "time (us)");

  overview.replaceChildren();
  const ow = overview.clientWidth;
  const line = WAVE.map(([t, v]) => `${ow * t / 10},${Math.round(17 - v * 11 / 850) + .5}`).join(" ");
  add(overview, "polyline", { ...crisp, points: line, stroke: "#ffbef0" });
}

draw();
addEventListener("resize", draw);
```
